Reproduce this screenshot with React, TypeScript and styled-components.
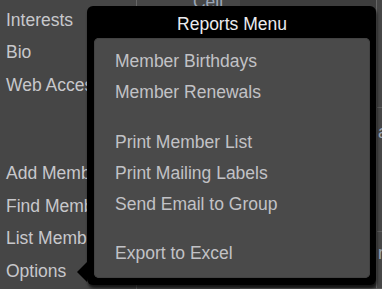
import React from "react";
import styled, { createGlobalStyle } from "styled-components";

const GlobalStyle = createGlobalStyle`
  html, body {
    margin: 0;
    padding: 0;
    background: #464646;
    overflow: hidden;
  }
  body {
    font-family: "Liberation Sans", Arial, sans-serif;
  }
`;

const Page = styled.div`
  position: relative;
  display: flex;
  width: 382px;
  height: 289px;
  overflow: hidden;
  background: #464646;
`;

const Sidebar = styled.nav`
  width: 137px;
  flex-shrink: 0;
  padding-top: 3.6px;
  border-right: 1px solid #666;
  box-sizing: border-box;
`;

const NavItem = styled.div`
  height: 32.5px;
  line-height: 32.5px;
  padding-left: 6px;
  font-size: 17.5px;
  color: #c8c8cc;
  white-space: nowrap;
`;

const NavGap = styled.div`
  height: 56px;
`;

const Content = styled.div`
  flex: 1;
  display: grid;
  grid-template-columns: 103px 136px 1fr;
  grid-template-rows: 119px 124px 1fr;
  margin-top: -11px;
`;

const Label = styled.div<{ $align?: "left" | "right" }>`
  font-size: 17.5px;
  line-height: 26px;
  color: #9aa6b8;
  text-align: ${(p) => p.$align ?? "right"};
  padding: 0 12px 0 1px;
  white-space: nowrap;
  overflow: hidden;
`;

const Field = styled.div`
  background: #3d3d3d;
  border-bottom: 1px solid #555;
`;

const SideCell = styled.div<{ $top?: number }>`
  border-left: 1px solid #666;
  border-bottom: 1px solid #5c5c5c;
  padding-top: ${(p) => p.$top ?? 0}px;
  overflow: hidden;
`;

const Popup = styled.div`
  position: absolute;
  left: 87px;
  top: 6px;
  width: 289px;
  height: 279px;
  box-sizing: border-box;
  padding: 0 6px 7px 7px;
  background: #000;
  border-radius: 6px;
  box-shadow: 1px 3px 3px rgba(0, 0, 0, 0.7);
  display: flex;
  flex-direction: column;
`;

const Arrow = styled.div`
  position: absolute;
  left: -10px;
  top: 256px;
  width: 0;
  height: 0;
  border-top: 10.5px solid transparent;
  border-bottom: 10.5px solid transparent;
  border-right: 10px solid #000;
`;

const PopupTitle = styled.div`
  height: 32px;
  padding-top: 1.5px;
  box-sizing: border-box;
  line-height: 32px;
  text-align: center;
  font-size: 17.5px;
  color: #ebebee;
`;

const Panel = styled.div`
  flex: 1;
  background: #4a4a4a;
  border-radius: 5px;
  box-shadow: inset 0 0 0 1px #424242;
  padding: 8.4px 0 0 21px;
`;

const MenuItem = styled.div`
  height: 31px;
  line-height: 31px;
  font-size: 17.5px;
  color: #c2c2c6;
  white-space: nowrap;
  cursor: pointer;
`;

const MenuSeparator = styled.div`
  height: 18.5px;
`;

const menuGroups = [
  ["Member Birthdays", "Member Renewals"],
  ["Print Member List", "Print Mailing Labels", "Send Email to Group"],
  ["Export to Excel"],
];

export default function App() {
  return (
    <>
      <GlobalStyle />
      <Page>
        <Sidebar>
          <NavItem>Interests</NavItem>
          <NavItem>Bio</NavItem>
          <NavItem>Web Access</NavItem>
          <NavGap />
          <NavItem>Add Member</NavItem>
          <NavItem>Find Member</NavItem>
          <NavItem>List Members</NavItem>
          <NavItem>Options</NavItem>
        </Sidebar>
        <Content>
          <Label>Cell:</Label>
          <Field />
          <SideCell />
          <Label />
          <Field />
          <SideCell $top={11}>
            <Label $align="left">age</Label>
          </SideCell>
          <Label />
          <Field />
          <SideCell $top={8}>
            <Label $align="left">role</Label>
          </SideCell>
        </Content>
        <Popup>
          <Arrow />
          <PopupTitle>Reports Menu</PopupTitle>
          <Panel>
            {menuGroups.map((group, gi) => (
              <React.Fragment key={gi}>
                {gi > 0 && <MenuSeparator />}
                {group.map((item) => (
                  <MenuItem key={item}>{item}</MenuItem>
                ))}
              </React.Fragment>
            ))}
          </Panel>
        </Popup>
      </Page>
    </>
  );
}
